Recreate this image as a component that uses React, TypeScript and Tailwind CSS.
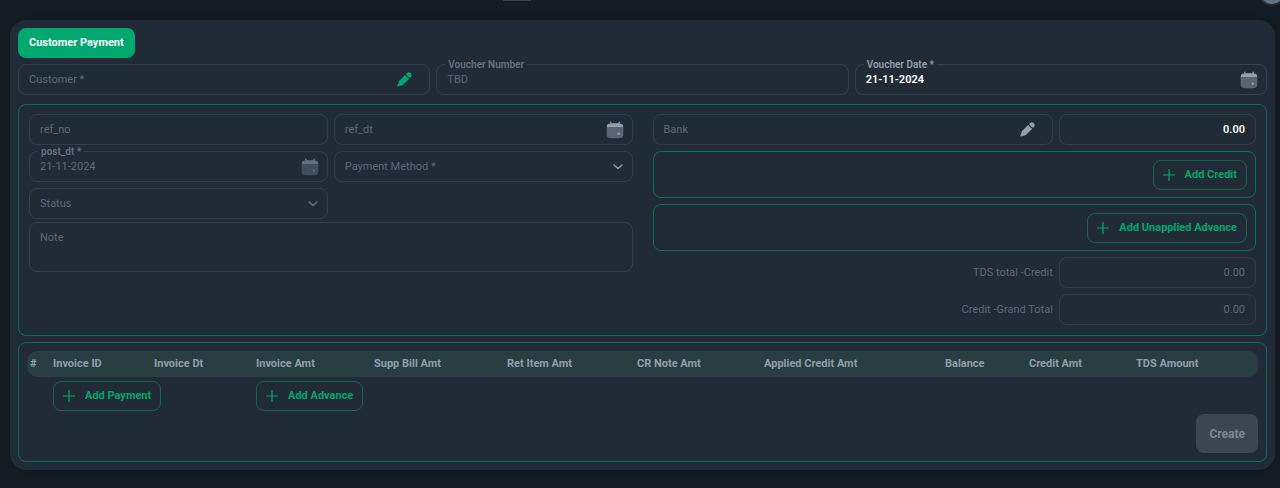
import React from 'react'

const CalendarIcon = ({ dim }: { dim?: boolean }) => (
  <svg viewBox="0 0 24 24" className={`size-5 ${dim ? 'text-[#64717f]' : 'text-[#919eab]'}`} aria-hidden="true">
    <path
      fill="currentColor"
      d="M7.75 2.5a.75.75 0 0 0-1.5 0v1.58c-1.44.115-2.384.397-3.078 1.092-.695.694-.977 1.639-1.093 3.078h19.842c-.116-1.44-.398-2.384-1.093-3.078-.694-.695-1.639-.977-3.078-1.093V2.5a.75.75 0 0 0-1.5 0v1.513C15.585 4 14.839 4 14 4h-4c-.839 0-1.585 0-2.25.013z"
    />
    <path
      fill="currentColor"
      opacity="0.5"
      d="M22 12v2c0 3.771 0 5.657-1.172 6.828S17.771 22 14 22h-4c-3.771 0-5.657 0-6.828-1.172S2 17.771 2 14v-2c0-.839 0-1.585.013-2.25.01-.55.03-1.05.066-1.5h19.842c.036.45.056.95.066 1.5C22 10.415 22 11.161 22 12"
    />
    <circle cx="16.5" cy="16.5" r="1.5" fill="currentColor" />
  </svg>
)

const PenIcon = ({ className }: { className: string }) => (
  <svg viewBox="0 0 24 24" className={`size-[17px] ${className}`} aria-hidden="true">
    <path
      fill="currentColor"
      d="m11.4 18.161 7.396-7.396a10.3 10.3 0 0 1-3.326-2.234 10.3 10.3 0 0 1-2.235-3.327L5.839 12.6c-.577.577-.866.866-1.114 1.184a6.6 6.6 0 0 0-.749 1.211c-.173.364-.302.752-.56 1.526l-1.362 4.083a1.06 1.06 0 0 0 1.342 1.342l4.083-1.362c.775-.258 1.162-.387 1.526-.56q.647-.308 1.211-.749c.318-.248.607-.537 1.184-1.114m9.448-9.448a3.932 3.932 0 0 0-5.561-5.561l-.887.887.038.111a8.75 8.75 0 0 0 2.092 3.32 8.75 8.75 0 0 0 3.431 2.13z"
    />
  </svg>
)

const ChevronIcon = ({ className }: { className: string }) => (
  <svg viewBox="0 0 10 6" className={`h-1.5 w-2.5 ${className}`} aria-hidden="true">
    <path d="M1 1l4 3.6L9 1" fill="none" stroke="currentColor" strokeWidth="1.4" strokeLinecap="round" strokeLinejoin="round" />
  </svg>
)

const PlusIcon = () => (
  <svg viewBox="0 0 12 12" className="size-3" aria-hidden="true">
    <path d="M6 .5v11M.5 6h11" fill="none" stroke="currentColor" strokeWidth="1.2" strokeLinecap="round" />
  </svg>
)

interface TextFieldProps {
  id: string
  label: string
  value?: string
  icon?: React.ReactNode
  active?: boolean
  disabled?: boolean
  className?: string
}

const TextField: React.FC<TextFieldProps> = ({ id, label, value, icon, active, disabled, className = '' }) => (
  <div className={`relative flex h-[31px] items-center rounded-lg border border-[#333e49] pr-[7px] pl-2.5 ${className}`}>
    <label
      htmlFor={id}
      className={
        value
          ? `absolute -top-1.5 left-2 bg-[#212b36] px-[3px] text-[10px] leading-3 font-semibold ${active ? 'text-[#919eab]' : 'text-[#64717f]'}`
          : 'text-[#5c6976]'
      }
    >
      {label}
    </label>
    <input
      id={id}
      type="text"
      defaultValue={value}
      disabled={disabled}
      className={`min-w-0 flex-1 bg-transparent outline-none ${active ? 'font-semibold text-white' : 'text-[#5c6976]'}`}
    />
    {icon}
  </div>
)

const SelectField = ({ id, label, bright }: { id: string; label: string; bright?: boolean }) => (
  <div className="relative flex h-[31px] items-center rounded-lg border border-[#333e49]">
    <label htmlFor={id} className="pointer-events-none absolute left-2.5 text-[#5c6976]">
      {label}
    </label>
    <select id={id} className="h-full w-full appearance-none bg-transparent px-2.5 outline-none">
      <option value="" />
    </select>
    <ChevronIcon className={`pointer-events-none absolute right-[9px] ${bright ? 'text-[#919eab]' : 'text-[#64717f]'}`} />
  </div>
)

const AmountField = ({ id, label, active }: { id: string; label: string; active?: boolean }) => (
  <input
    id={id}
    aria-label={label}
    type="text"
    defaultValue="0.00"
    disabled={!active}
    className={`h-[31px] w-full min-w-0 rounded-lg border border-[#333e49] bg-transparent px-2.5 text-right outline-none ${active ? 'font-semibold text-white' : 'text-[#5c6976]'}`}
  />
)

const AddButton = ({ children }: { children: React.ReactNode }) => (
  <button
    type="button"
    className="flex h-[30px] items-center gap-2.5 rounded-lg border border-[#12664f] px-[9px] font-bold whitespace-nowrap text-[#00a76f]"
  >
    <PlusIcon />
    {children}
  </button>
)

const columns = [
  { title: '#', width: 'w-[23px]' },
  { title: 'Invoice ID', width: 'w-[101px]' },
  { title: 'Invoice Dt', width: 'w-[102px]' },
  { title: 'Invoice Amt', width: 'w-[118px]' },
  { title: 'Supp Bill Amt', width: 'w-[133px]' },
  { title: 'Ret Item Amt', width: 'w-[130px]' },
  { title: 'CR Note Amt', width: 'w-[127px]' },
  { title: 'Applied Credit Amt', width: 'w-[181px]' },
  { title: 'Balance', width: 'w-[84px]' },
  { title: 'Credit Amt', width: 'w-[107px]' },
  { title: 'TDS Amount', width: 'w-[125px]' },
]

export default function App() {
  return (
    <div className="min-h-screen bg-[#161c24] font-[Roboto,sans-serif] text-[11px] leading-4 text-[#919eab]">
      {/* Bottom edge of the app header */}
      <header className="flex h-5 items-start justify-between overflow-hidden pl-[503px]">
        <div className="h-px w-7 bg-[#37414c]" />
        <div className="-mt-5 -mr-1 size-6 shrink-0 rounded-full bg-[#637381] ring-2 ring-[#212b36]" />
      </header>

      <main className="mr-[5px] mb-[18px] ml-2.5 rounded-2xl bg-[#212b36] p-2 shadow-[0_0_12px_rgba(0,0,0,0.2)]">
        <form onSubmit={(e) => e.preventDefault()}>
          <button type="button" className="mb-1.5 flex h-[30px] items-center rounded-lg bg-[#00a76f] px-[11px] font-bold text-white">
            Customer Payment
          </button>

          <div className="mb-[9px] grid grid-cols-3 gap-1.5">
            <TextField id="customer" label="Customer *" icon={<PenIcon className="mr-[9px] text-[#00a76f]" />} />
            <TextField id="voucher-number" label="Voucher Number" value="TBD" disabled />
            <TextField id="voucher-date" label="Voucher Date *" value="21-11-2024" active icon={<CalendarIcon />} />
          </div>

          {/* Payment details */}
          <section className="mb-1.5 grid grid-cols-2 gap-5 rounded-lg border border-[#08705a] px-2.5 pt-[9px] pb-2.5">
            <div>
              <div className="mb-[3px] grid grid-cols-2 gap-1.5">
                <TextField id="ref-no" label="ref_no" />
                <TextField id="ref-dt" label="ref_dt" icon={<CalendarIcon />} />
                <TextField id="post-dt" label="post_dt *" value="21-11-2024" disabled icon={<CalendarIcon dim />} />
                <SelectField id="payment-method" label="Payment Method *" bright />
                <SelectField id="status" label="Status" />
              </div>
              <div className="relative">
                <label htmlFor="note" className="pointer-events-none absolute top-2 left-[11px] text-[#5c6976]">
                  Note
                </label>
                <textarea
                  id="note"
                  className="block h-[50px] w-full resize-none rounded-lg border border-[#333e49] bg-transparent px-2.5 py-[7px] outline-none"
                />
              </div>
            </div>

            <div className="grid grid-cols-3 items-center gap-1.5">
              <TextField id="bank" label="Bank" className="col-span-2" icon={<PenIcon className="mr-[9px]" />} />
              <AmountField id="bank-amount" label="Bank amount" active />

              <div className="col-span-3 flex h-[47px] items-center justify-end rounded-lg border border-[#08705a] px-2">
                <AddButton>Add Credit</AddButton>
              </div>
              <div className="col-span-3 flex h-[47px] items-center justify-end rounded-lg border border-[#08705a] px-2">
                <AddButton>Add Unapplied Advance</AddButton>
              </div>

              <label htmlFor="tds-total" className="col-span-2 text-right text-[#5c6976]">TDS total -Credit</label>
              <AmountField id="tds-total" label="TDS total -Credit" />
              <label htmlFor="grand-total" className="col-span-2 text-right text-[#5c6976]">Credit -Grand Total</label>
              <AmountField id="grand-total" label="Credit -Grand Total" />
            </div>
          </section>

          {/* Invoices */}
          <section className="rounded-lg border border-[#08705a] p-2">
            <table className="w-full table-fixed border-separate border-spacing-0 text-left">
              <thead>
                <tr>
                  {columns.map((column) => (
                    <th
                      key={column.title}
                      className={`h-[26px] bg-[#283e41] p-0 pl-[3px] font-bold whitespace-nowrap first:rounded-l-[10px] last:rounded-r-[10px] ${column.width}`}
                    >
                      {column.title}
                    </th>
                  ))}
                </tr>
              </thead>
              <tbody>
                <tr>
                  <td />
                  <td colSpan={2} className="p-0 pt-1 pl-[3px]">
                    <AddButton>Add Payment</AddButton>
                  </td>
                  <td colSpan={8} className="p-0 pt-1 pl-[3px]">
                    <AddButton>Add Advance</AddButton>
                  </td>
                </tr>
              </tbody>
            </table>
            <div className="mt-[3px] flex justify-end">
              <button type="submit" disabled className="h-[39px] rounded-lg bg-[#3b4650] px-[13px] text-xs font-bold text-[#7b8793]">
                Create
              </button>
            </div>
          </section>
        </form>
      </main>
    </div>
  )
}
